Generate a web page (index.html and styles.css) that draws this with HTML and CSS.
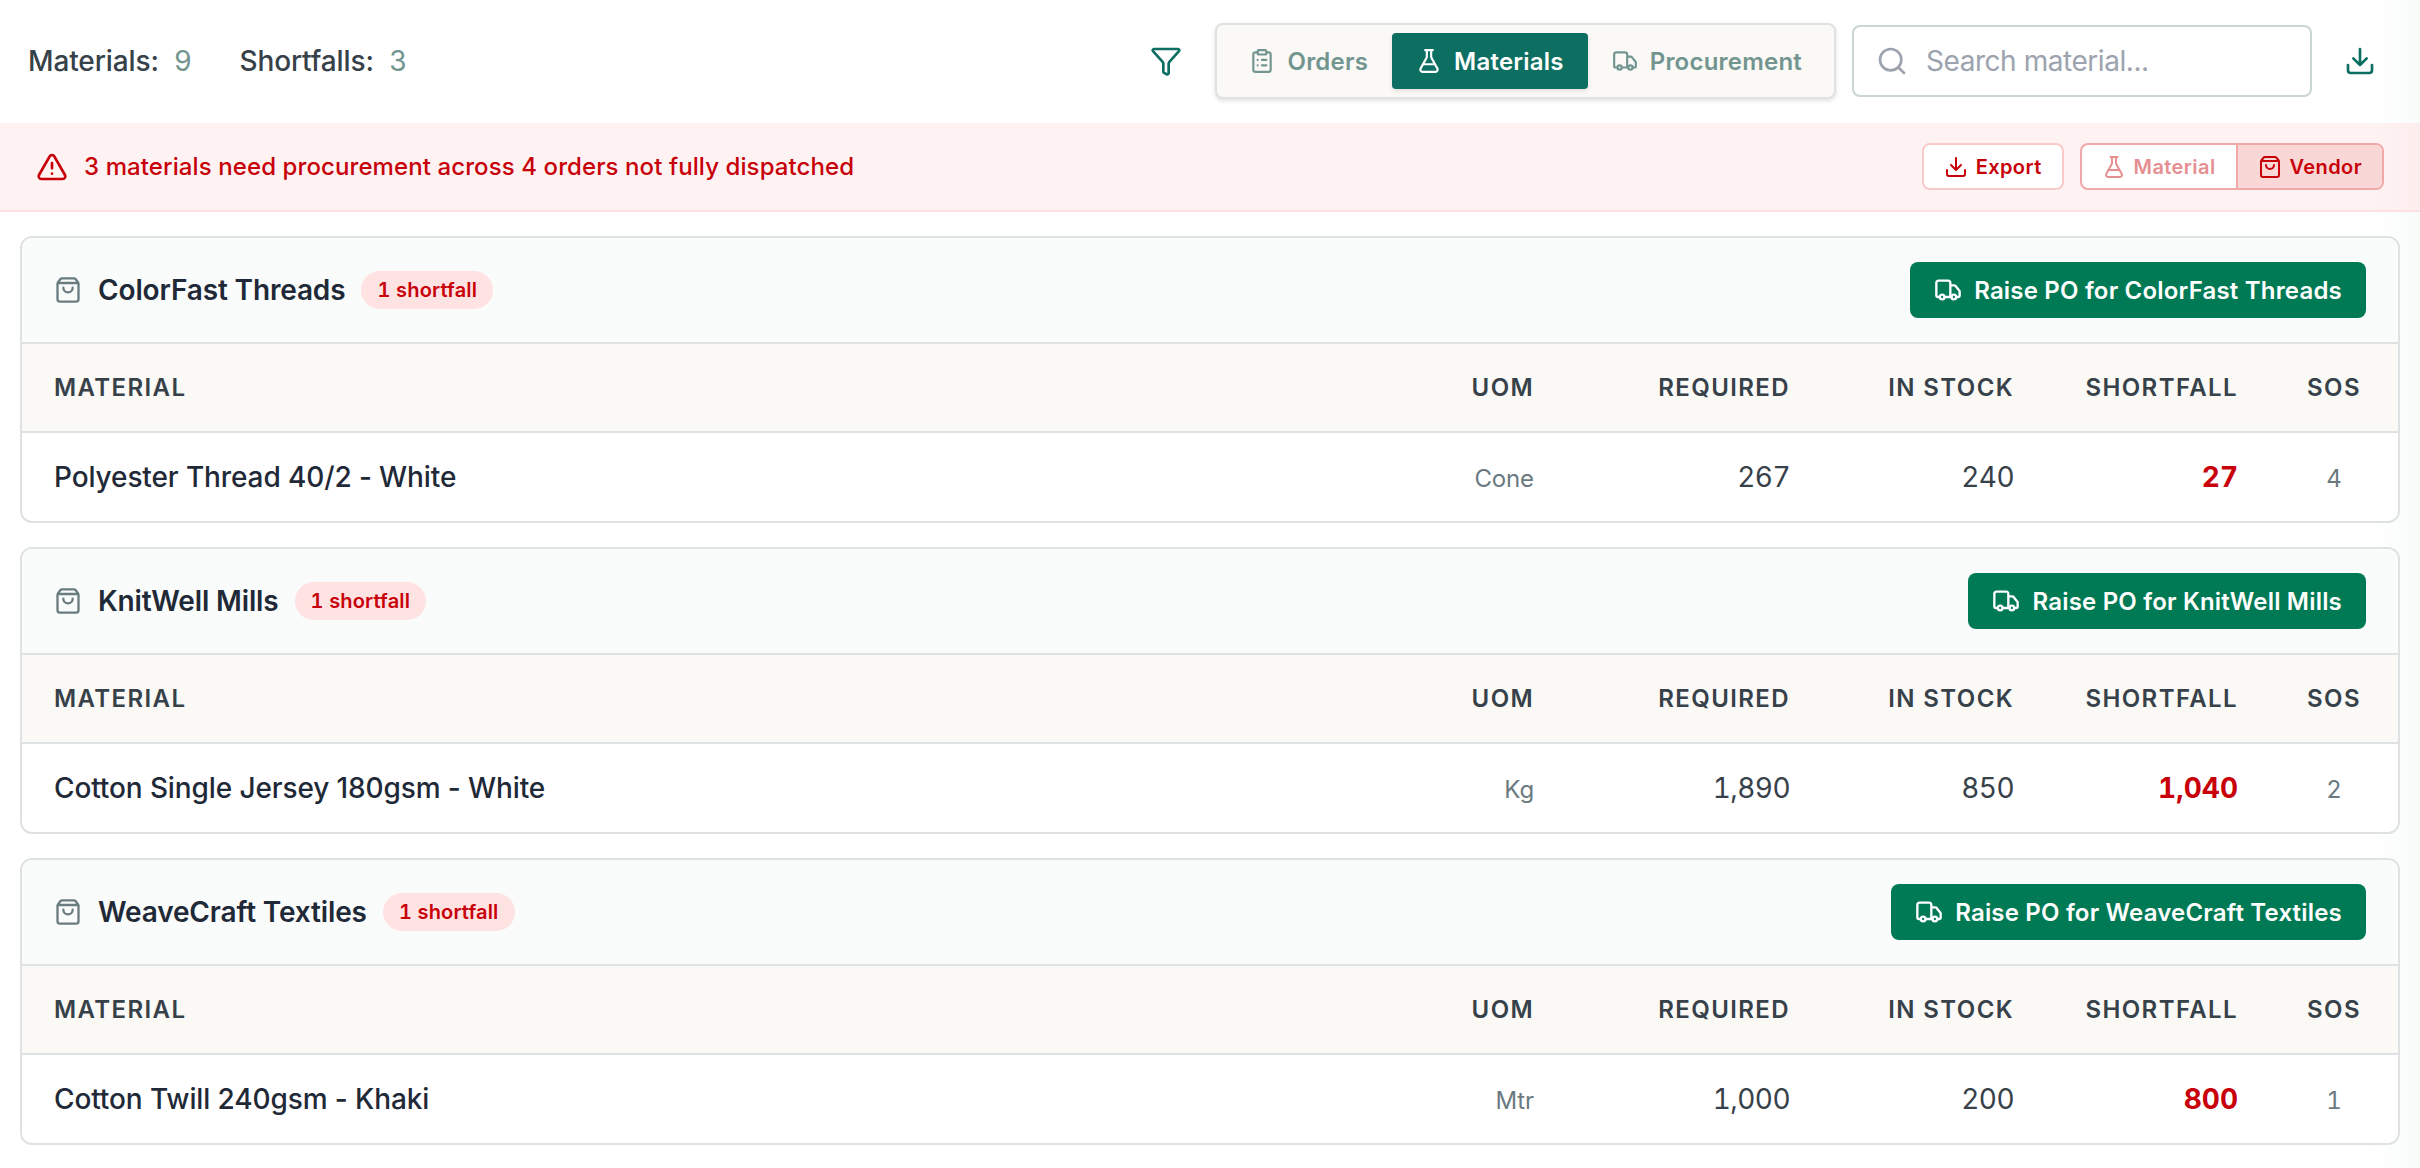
FILE: index.html
```
<!DOCTYPE html>
<html lang="en">
<head>
    <meta charset="UTF-8">
    <meta name="viewport" content="width=device-width, initial-scale=1.0">
    <title>Materials</title>
    <link rel="stylesheet" href="styles.css">
</head>
<body>
    <!-- Shared icons -->
    <svg class="sprite" aria-hidden="true">
        <symbol id="i-filter" viewBox="0 0 24 24"><path d="M10 20a1 1 0 0 0 .553.895l2 1A1 1 0 0 0 14 21v-7a2 2 0 0 1 .517-1.341L21.74 4.67A1 1 0 0 0 21 3H3a1 1 0 0 0-.742 1.67l7.225 7.989A2 2 0 0 1 10 14z"/></symbol>
        <symbol id="i-clipboard" viewBox="0 0 24 24"><rect x="8" y="2" width="8" height="4" rx="1"/><path d="M16 4h2a2 2 0 0 1 2 2v14a2 2 0 0 1-2 2H6a2 2 0 0 1-2-2V6a2 2 0 0 1 2-2h2M12 11h4M12 16h4M8 11h.01M8 16h.01"/></symbol>
        <symbol id="i-flask" viewBox="0 0 24 24"><path d="M14 2v6a2 2 0 0 0 .245.96l5.51 10.08A2 2 0 0 1 18 22H6a2 2 0 0 1-1.755-2.96l5.51-10.08A2 2 0 0 0 10 8V2M6.453 15h11.094M8.5 2h7"/></symbol>
        <symbol id="i-truck" viewBox="0 0 24 24"><path d="M14 18V6a2 2 0 0 0-2-2H4a2 2 0 0 0-2 2v11a1 1 0 0 0 1 1h2M15 18H9M19 18h2a1 1 0 0 0 1-1v-3.65a1 1 0 0 0-.22-.624l-3.48-4.35A1 1 0 0 0 17.52 8H14"/><circle cx="17" cy="18" r="2"/><circle cx="7" cy="18" r="2"/></symbol>
        <symbol id="i-search" viewBox="0 0 24 24"><circle cx="11" cy="11" r="8"/><path d="m21 21-4.34-4.34"/></symbol>
        <symbol id="i-download" viewBox="0 0 24 24"><path d="M12 15V3M21 15v4a2 2 0 0 1-2 2H5a2 2 0 0 1-2-2v-4M7 10l5 5 5-5"/></symbol>
        <symbol id="i-alert" viewBox="0 0 24 24"><path d="m21.73 18-8-14a2 2 0 0 0-3.48 0l-8 14A2 2 0 0 0 4 21h16a2 2 0 0 0 1.73-3M12 9v4M12 17h.01"/></symbol>
        <symbol id="i-bag" viewBox="0 0 24 24"><path d="M16 10a4 4 0 0 1-8 0M3.103 6.034h17.794M3.4 5.467a2 2 0 0 0-.4 1.2V20a2 2 0 0 0 2 2h14a2 2 0 0 0 2-2V6.667a2 2 0 0 0-.4-1.2l-2-2.667A2 2 0 0 0 17 2H7a2 2 0 0 0-1.6.8z"/></symbol>
    </svg>

    <header class="topbar">
        <div class="stats">
            <span class="stat">Materials: <b>9</b></span>
            <span class="stat">Shortfalls: <b>3</b></span>
        </div>
        <div class="tools">
            <button class="icon-btn filter-btn" aria-label="Filter"><svg class="icon icon-lg"><use href="#i-filter"/></svg></button>
            <nav class="tabs">
                <button class="tab"><svg class="icon icon-md"><use href="#i-clipboard"/></svg>Orders</button>
                <button class="tab active"><svg class="icon icon-md"><use href="#i-flask"/></svg>Materials</button>
                <button class="tab"><svg class="icon icon-md"><use href="#i-truck"/></svg>Procurement</button>
            </nav>
            <label class="search">
                <svg class="icon icon-lg"><use href="#i-search"/></svg>
                <input type="text" placeholder="Search material...">
            </label>
            <button class="icon-btn download-btn" aria-label="Download"><svg class="icon icon-lg"><use href="#i-download"/></svg></button>
        </div>
    </header>

    <section class="alert">
        <svg class="icon icon-lg"><use href="#i-alert"/></svg>
        <p class="alert-text">3 materials need procurement across 4 orders not fully dispatched</p>
        <button class="export-btn"><svg class="icon icon-sm"><use href="#i-download"/></svg>Export</button>
        <div class="toggle">
            <button class="toggle-btn"><svg class="icon icon-sm"><use href="#i-flask"/></svg>Material</button>
            <button class="toggle-btn active"><svg class="icon icon-sm"><use href="#i-bag"/></svg>Vendor</button>
        </div>
    </section>

    <main class="vendors">
        <section class="card">
            <div class="card-header">
                <svg class="icon icon-bag"><use href="#i-bag"/></svg>
                <h2>ColorFast Threads</h2>
                <span class="pill">1 shortfall</span>
                <button class="po-btn"><svg class="icon icon-truck"><use href="#i-truck"/></svg>Raise PO for ColorFast Threads</button>
            </div>
            <table>
                <thead>
                    <tr><th class="name">Material</th><th class="uom">UOM</th><th class="req">Required</th><th class="stock">In Stock</th><th class="short">Shortfall</th><th class="sos">SOs</th></tr>
                </thead>
                <tbody>
                    <tr><td class="name">Polyester Thread 40/2 - White</td><td class="uom">Cone</td><td class="req">267</td><td class="stock">240</td><td class="short">27</td><td class="sos">4</td></tr>
                </tbody>
            </table>
        </section>

        <section class="card">
            <div class="card-header">
                <svg class="icon icon-bag"><use href="#i-bag"/></svg>
                <h2>KnitWell Mills</h2>
                <span class="pill">1 shortfall</span>
                <button class="po-btn"><svg class="icon icon-truck"><use href="#i-truck"/></svg>Raise PO for KnitWell Mills</button>
            </div>
            <table>
                <thead>
                    <tr><th class="name">Material</th><th class="uom">UOM</th><th class="req">Required</th><th class="stock">In Stock</th><th class="short">Shortfall</th><th class="sos">SOs</th></tr>
                </thead>
                <tbody>
                    <tr><td class="name">Cotton Single Jersey 180gsm - White</td><td class="uom">Kg</td><td class="req">1,890</td><td class="stock">850</td><td class="short">1,040</td><td class="sos">2</td></tr>
                </tbody>
            </table>
        </section>

        <section class="card">
            <div class="card-header">
                <svg class="icon icon-bag"><use href="#i-bag"/></svg>
                <h2>WeaveCraft Textiles</h2>
                <span class="pill">1 shortfall</span>
                <button class="po-btn"><svg class="icon icon-truck"><use href="#i-truck"/></svg>Raise PO for WeaveCraft Textiles</button>
            </div>
            <table>
                <thead>
                    <tr><th class="name">Material</th><th class="uom">UOM</th><th class="req">Required</th><th class="stock">In Stock</th><th class="short">Shortfall</th><th class="sos">SOs</th></tr>
                </thead>
                <tbody>
                    <tr><td class="name">Cotton Twill 240gsm - Khaki</td><td class="uom">Mtr</td><td class="req">1,000</td><td class="stock">200</td><td class="short">800</td><td class="sos">1</td></tr>
                </tbody>
            </table>
        </section>
    </main>
</body>
</html>
```
FILE: styles.css
```
:root {
    --teal: #0d6e62;
    --muted: #739590;
    --red: #c70009;
    --line: #dfe2e3;
    --ink: #1f2937;
    --ink-soft: #374149;
}

* {
    box-sizing: border-box;
}

body {
    margin: 0;
    min-height: 100vh;
    font-family: Inter, "Liberation Sans", sans-serif;
    color: var(--ink);
    background: linear-gradient(to left, #f9fbfb, #fff 50px);
}

button {
    display: flex;
    align-items: center;
    margin: 0;
    padding: 0;
    border: none;
    background: none;
    font: inherit;
    letter-spacing: inherit;
    color: inherit;
    white-space: nowrap;
    cursor: pointer;
}

.sprite {
    position: absolute;
    width: 0;
    height: 0;
}

.icon {
    flex: none;
    fill: none;
    stroke: currentColor;
    stroke-width: 2;
    stroke-linecap: round;
    stroke-linejoin: round;
}

.icon-lg { width: 32px; height: 32px; }
.icon-md { width: 26px; height: 26px; }
.icon-sm { width: 24px; height: 24px; }
.icon-truck { width: 28px; height: 28px; }
.icon-bag { width: 28px; height: 28px; color: #6b7c80; }

/* Top bar */
.topbar {
    display: flex;
    align-items: center;
    justify-content: space-between;
    height: 123px;
    padding: 0 44px 1px 28px;
}

.stats {
    display: flex;
    gap: 48px;
    font-size: 28px;
    font-weight: 500;
    letter-spacing: -0.004em;
    color: var(--ink-soft);
}

.stat b {
    margin-left: 8px;
    font-weight: 400;
    color: var(--muted);
}

.tools {
    display: flex;
    align-items: center;
}

.icon-btn {
    color: var(--teal);
}

.filter-btn {
    margin-right: 33px;
}

.download-btn {
    margin-left: 32px;
}

.tabs {
    display: flex;
    height: 76px;
    padding: 8px;
    border: 2px solid var(--line);
    border-radius: 8px;
    background: #faf9f6;
    box-shadow: 0 2px 4px rgba(0, 0, 0, 0.12);
}

.tab {
    gap: 12px;
    padding: 0 24px;
    border-radius: 4px;
    font-size: 24px;
    font-weight: 600;
    letter-spacing: 0.009em;
    color: var(--muted);
}

.tab.active {
    background: var(--teal);
    color: #fff;
    box-shadow: 0 2px 4px rgba(0, 0, 0, 0.1);
}

.search {
    display: flex;
    align-items: center;
    gap: 18px;
    width: 460px;
    height: 72px;
    margin-left: 16px;
    padding: 0 22px;
    border: 2px solid #cbd5d6;
    border-radius: 8px;
    background: #fff;
    color: #9ca3af;
}

.search input {
    width: 100%;
    padding: 0;
    border: none;
    outline: none;
    background: none;
    font: inherit;
    font-size: 28px;
    letter-spacing: -0.016em;
}

.search input::placeholder {
    color: #9ca3af;
}

/* Shortfall banner */
.alert {
    display: flex;
    align-items: center;
    height: 89px;
    padding: 0 36px;
    border-bottom: 2px solid #ffe0e0;
    background: linear-gradient(to left, #fdeeee, #fef2f2 50px);
    color: var(--red);
}

.alert-text {
    flex: 1;
    margin: 0 0 0 16px;
    font-size: 24px;
    font-weight: 500;
    letter-spacing: 0.004em;
}

.export-btn,
.toggle {
    height: 47px;
    border: 2px solid #fac9c9;
    border-radius: 8px;
    background: #fff;
    font-size: 20px;
    font-weight: 600;
    letter-spacing: 0.02em;
}

.export-btn {
    gap: 8px;
    padding: 0 20px;
}

.toggle {
    display: flex;
    margin-left: 16px;
    border-color: #f0a8a8;
    overflow: hidden;
}

.toggle-btn {
    gap: 8px;
    padding: 0 20px;
    color: #e58f92;
}

.toggle-btn.active {
    border-left: 2px solid #f0a8a8;
    background: #fad7d7;
    color: var(--red);
}

/* Vendor cards */
.vendors {
    display: flex;
    flex-direction: column;
    gap: 24px;
    padding: 24px 20px;
}

.card {
    border: 2px solid var(--line);
    border-radius: 12px;
    background: #fff;
    overflow: hidden;
}

.card-header {
    display: flex;
    align-items: center;
    gap: 16px;
    height: 106px;
    padding: 0 32px;
    border-bottom: 2px solid var(--line);
    background: #fafcfb;
}

.card-header h2 {
    margin: 0;
    font-size: 28px;
    font-weight: 600;
    letter-spacing: -0.005em;
}

.pill {
    padding: 0 16px;
    border-radius: 19px;
    background: #ffe2e2;
    color: var(--red);
    font-size: 20px;
    font-weight: 600;
    font-variant-numeric: tabular-nums;
    letter-spacing: 0.008em;
    line-height: 38px;
}

.po-btn {
    gap: 12px;
    height: 56px;
    margin-left: auto;
    padding: 0 24px;
    border-radius: 8px;
    background: #007a55;
    color: #fff;
    font-size: 24px;
    font-weight: 600;
    letter-spacing: 0.008em;
}

table {
    width: 100%;
    table-layout: fixed;
    border-collapse: separate;
    border-spacing: 0;
}

th,
td {
    padding: 0 32px 0 0;
    text-align: right;
    white-space: nowrap;
}

th {
    height: 89px;
    border-bottom: 2px solid var(--line);
    background: #faf9f6;
    font-size: 24px;
    font-weight: 600;
    letter-spacing: 0.058em;
    text-transform: uppercase;
    color: var(--ink-soft);
}

td {
    padding-top: 27px;
    padding-bottom: 27px;
    font-size: 28px;
    line-height: 34px;
    vertical-align: baseline;
    color: var(--ink-soft);
    font-variant-numeric: tabular-nums;
    letter-spacing: -0.02em;
}

.name {
    padding-left: 32px;
    text-align: left;
}

td.name {
    font-weight: 500;
    font-variant-numeric: normal;
    letter-spacing: -0.004em;
    color: var(--ink);
}

.uom { width: 192px; }
.req { width: 256px; }
.stock { width: 224px; }
.short { width: 224px; }

.sos {
    width: 128px;
    padding-right: 0;
    text-align: center;
}

/* smaller text sits on the row baseline without growing the row */
td.uom,
td.sos {
    padding-bottom: 0;
    font-size: 24px;
    letter-spacing: -0.005em;
    color: #6b7a80;
}

td.short {
    font-weight: 700;
    letter-spacing: 0;
    color: var(--red);
}
```
